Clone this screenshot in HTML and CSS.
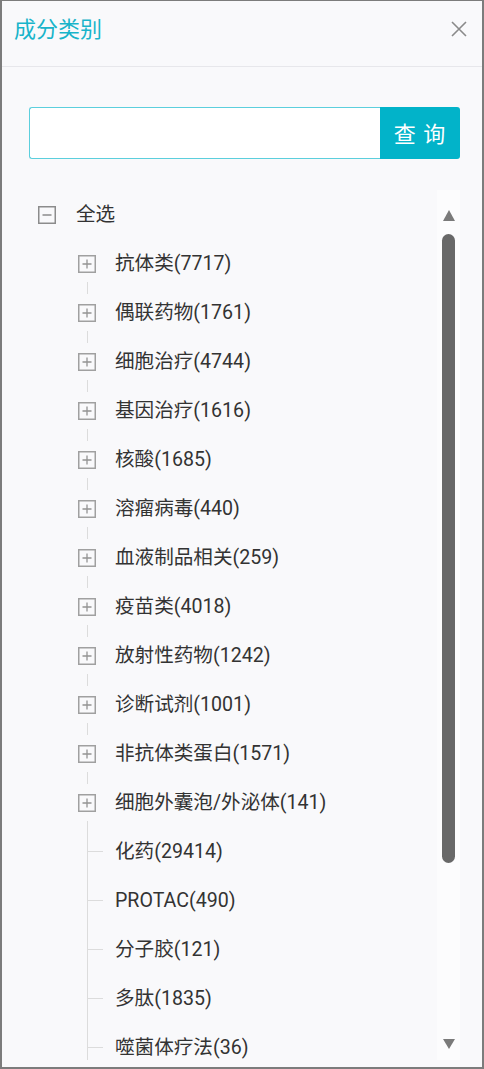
FILE: index.html
```html
<!DOCTYPE html>
<html>
<head>
    <meta charset="utf-8">
    <title>成分类别</title>
    <link rel="stylesheet" href="styles.css">
</head>
<body>
    <div class="panel">
        <div class="header">
            <h2 class="title">成分类别</h2>
            <svg class="close" width="16" height="16" viewBox="0 0 16 16">
                <path d="M1 1 L15 15 M15 1 L1 15" stroke="#8a8a8a" stroke-width="1.6" fill="none"/>
            </svg>
        </div>

        <div class="search">
            <input class="search-input" type="text">
            <button class="search-btn">查 询</button>
        </div>

        <div class="tree-area">
            <div class="tree">
                <div class="row root">
                    <svg class="box" width="18" height="18" viewBox="0 0 18 18">
                        <rect x="0.75" y="0.75" width="16.5" height="16.5" fill="none" stroke="#8c8c8c" stroke-width="1.5"/>
                        <path d="M4.5 9 H13.5" stroke="#7a7a7a" stroke-width="1.3"/>
                    </svg>
                    <span>全选</span>
                </div>
                <ul class="children">
                    <li class="row node"><svg class="box" width="18" height="18" viewBox="0 0 18 18"><rect x="0.75" y="0.75" width="16.5" height="16.5" fill="none" stroke="#a0a0a0" stroke-width="1.5"/><path d="M4.5 9 H13.5 M9 4.5 V13.5" stroke="#939393" stroke-width="1.3"/></svg><span>抗体类(7717)</span></li>
                    <li class="row node"><svg class="box" width="18" height="18" viewBox="0 0 18 18"><rect x="0.75" y="0.75" width="16.5" height="16.5" fill="none" stroke="#a0a0a0" stroke-width="1.5"/><path d="M4.5 9 H13.5 M9 4.5 V13.5" stroke="#939393" stroke-width="1.3"/></svg><span>偶联药物(1761)</span></li>
                    <li class="row node"><svg class="box" width="18" height="18" viewBox="0 0 18 18"><rect x="0.75" y="0.75" width="16.5" height="16.5" fill="none" stroke="#a0a0a0" stroke-width="1.5"/><path d="M4.5 9 H13.5 M9 4.5 V13.5" stroke="#939393" stroke-width="1.3"/></svg><span>细胞治疗(4744)</span></li>
                    <li class="row node"><svg class="box" width="18" height="18" viewBox="0 0 18 18"><rect x="0.75" y="0.75" width="16.5" height="16.5" fill="none" stroke="#a0a0a0" stroke-width="1.5"/><path d="M4.5 9 H13.5 M9 4.5 V13.5" stroke="#939393" stroke-width="1.3"/></svg><span>基因治疗(1616)</span></li>
                    <li class="row node"><svg class="box" width="18" height="18" viewBox="0 0 18 18"><rect x="0.75" y="0.75" width="16.5" height="16.5" fill="none" stroke="#a0a0a0" stroke-width="1.5"/><path d="M4.5 9 H13.5 M9 4.5 V13.5" stroke="#939393" stroke-width="1.3"/></svg><span>核酸(1685)</span></li>
                    <li class="row node"><svg class="box" width="18" height="18" viewBox="0 0 18 18"><rect x="0.75" y="0.75" width="16.5" height="16.5" fill="none" stroke="#a0a0a0" stroke-width="1.5"/><path d="M4.5 9 H13.5 M9 4.5 V13.5" stroke="#939393" stroke-width="1.3"/></svg><span>溶瘤病毒(440)</span></li>
                    <li class="row node"><svg class="box" width="18" height="18" viewBox="0 0 18 18"><rect x="0.75" y="0.75" width="16.5" height="16.5" fill="none" stroke="#a0a0a0" stroke-width="1.5"/><path d="M4.5 9 H13.5 M9 4.5 V13.5" stroke="#939393" stroke-width="1.3"/></svg><span>血液制品相关(259)</span></li>
                    <li class="row node"><svg class="box" width="18" height="18" viewBox="0 0 18 18"><rect x="0.75" y="0.75" width="16.5" height="16.5" fill="none" stroke="#a0a0a0" stroke-width="1.5"/><path d="M4.5 9 H13.5 M9 4.5 V13.5" stroke="#939393" stroke-width="1.3"/></svg><span>疫苗类(4018)</span></li>
                    <li class="row node"><svg class="box" width="18" height="18" viewBox="0 0 18 18"><rect x="0.75" y="0.75" width="16.5" height="16.5" fill="none" stroke="#a0a0a0" stroke-width="1.5"/><path d="M4.5 9 H13.5 M9 4.5 V13.5" stroke="#939393" stroke-width="1.3"/></svg><span>放射性药物(1242)</span></li>
                    <li class="row node"><svg class="box" width="18" height="18" viewBox="0 0 18 18"><rect x="0.75" y="0.75" width="16.5" height="16.5" fill="none" stroke="#a0a0a0" stroke-width="1.5"/><path d="M4.5 9 H13.5 M9 4.5 V13.5" stroke="#939393" stroke-width="1.3"/></svg><span>诊断试剂(1001)</span></li>
                    <li class="row node"><svg class="box" width="18" height="18" viewBox="0 0 18 18"><rect x="0.75" y="0.75" width="16.5" height="16.5" fill="none" stroke="#a0a0a0" stroke-width="1.5"/><path d="M4.5 9 H13.5 M9 4.5 V13.5" stroke="#939393" stroke-width="1.3"/></svg><span>非抗体类蛋白(1571)</span></li>
                    <li class="row node"><svg class="box" width="18" height="18" viewBox="0 0 18 18"><rect x="0.75" y="0.75" width="16.5" height="16.5" fill="none" stroke="#a0a0a0" stroke-width="1.5"/><path d="M4.5 9 H13.5 M9 4.5 V13.5" stroke="#939393" stroke-width="1.3"/></svg><span>细胞外囊泡/外泌体(141)</span></li>
                    <li class="row leaf"><span>化药(29414)</span></li>
                    <li class="row leaf"><span>PROTAC(490)</span></li>
                    <li class="row leaf"><span>分子胶(121)</span></li>
                    <li class="row leaf"><span>多肽(1835)</span></li>
                    <li class="row leaf"><span>噬菌体疗法(36)</span></li>
                </ul>
            </div>

            <div class="scrollbar">
                <div class="arrow-up"></div>
                <div class="thumb"></div>
                <div class="spacer"></div>
                <div class="arrow-down"></div>
            </div>
        </div>
    </div>
</body>
</html>
```

FILE: styles.css
```css
body {
    margin: 0;
    padding: 0;
    font-family: Roboto, "Noto Sans CJK SC", sans-serif;
    color: #333;
    background-color: #fff;
}

.panel {
    width: 484px;
    height: 1069px;
    box-sizing: border-box;
    border: 2px solid #7c7c7c;
    border-top-width: 1px;
    background-color: #f9f9fb;
    display: flex;
    flex-direction: column;
    overflow: hidden;
}

.header {
    height: 66px;
    box-sizing: border-box;
    border-bottom: 1px solid #e7e7eb;
    padding: 14px 15px 0 12px;
    display: flex;
    justify-content: space-between;
    align-items: flex-start;
    flex-shrink: 0;
}

.title {
    margin: 0;
    font-size: 22px;
    font-weight: normal;
    line-height: 30px;
    color: #19b4ca;
}

.close {
    margin-top: 6px;
}

.search {
    display: flex;
    margin: 40px 22px 0 27px;
    height: 52px;
    flex-shrink: 0;
}

.search-input {
    flex: 1;
    height: 52px;
    box-sizing: border-box;
    border: 1px solid #5ccfdd;
    border-right: none;
    border-radius: 3px 0 0 3px;
    background-color: #fff;
    outline: none;
    padding: 0 10px;
}

.search-btn {
    width: 80px;
    height: 52px;
    border: none;
    border-radius: 0 3px 3px 0;
    background-color: #02b3c9;
    color: #fff;
    font-family: Roboto, "Noto Sans CJK SC", sans-serif;
    font-size: 22px;
    letter-spacing: 1px;
    padding: 0 0 2px 0;
    cursor: pointer;
}

.tree-area {
    display: flex;
    margin-top: 31px;
    height: 870px;
    flex-shrink: 0;
}

.tree {
    flex: 1;
    overflow: hidden;
    padding-left: 36px;
}

.row {
    height: 49px;
    display: flex;
    align-items: center;
    font-size: 19.6px;
    line-height: 22px;
    color: #333;
    white-space: nowrap;
}

.root .box {
    margin-right: 20px;
}

.children {
    list-style: none;
    margin: 0;
    padding: 0 0 0 40px;
}

.node {
    position: relative;
}

.node .box {
    margin-right: 19px;
}

.node::after {
    content: "";
    position: absolute;
    left: 9px;
    top: 43px;
    width: 1px;
    height: 12px;
    background-color: #dcdcdc;
}

.node:nth-last-child(6)::after {
    height: 6px;
}

.leaf {
    position: relative;
    padding-left: 37px;
}

.leaf::before {
    content: "";
    position: absolute;
    left: 9px;
    top: 0;
    bottom: 0;
    width: 1px;
    background-color: #dcdcdc;
}

.leaf::after {
    content: "";
    position: absolute;
    left: 10px;
    top: 24px;
    width: 15px;
    height: 1px;
    background-color: #dcdcdc;
}

.scrollbar {
    width: 23px;
    margin-right: 22px;
    background-color: #fcfcfd;
    display: flex;
    flex-direction: column;
    align-items: center;
    padding: 20px 0 11px 0;
    box-sizing: border-box;
}

.arrow-up {
    width: 0;
    height: 0;
    border-left: 6.5px solid transparent;
    border-right: 6.5px solid transparent;
    border-bottom: 11px solid #7a7a7a;
}

.thumb {
    width: 13px;
    height: 629px;
    margin-top: 13px;
    border-radius: 7px;
    background-color: #686868;
}

.spacer {
    flex: 1;
}

.arrow-down {
    width: 0;
    height: 0;
    border-left: 6.5px solid transparent;
    border-right: 6.5px solid transparent;
    border-top: 10px solid #7a7a7a;
}
```
